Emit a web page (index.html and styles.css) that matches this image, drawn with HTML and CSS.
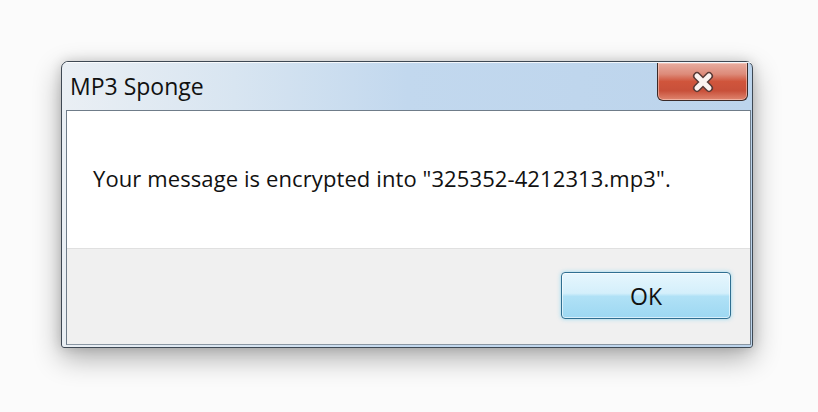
FILE: index.html
```html
<!DOCTYPE html>
<html lang="en">
<head>
    <meta charset="UTF-8">
    <title>MP3 Sponge</title>
    <link rel="stylesheet" href="styles.css">
</head>
<body>
    <div class="window">
        <div class="titlebar">
            <span class="title">MP3 Sponge</span>
            <button class="close-btn" aria-label="Close">
                <svg width="26" height="22" viewBox="0 0 26 22">
                    <path d="M7 5 L19 17 M19 5 L7 17" stroke="#5a3a36" stroke-width="8" stroke-linecap="round"/>
                    <path d="M7 5 L19 17 M19 5 L7 17" stroke="#fbf3f0" stroke-width="5" stroke-linecap="round"/>
                </svg>
            </button>
        </div>

        <div class="client">
            <div class="message">
                Your message is encrypted into "325352-4212313.mp3".
            </div>
            <div class="footer">
                <button class="ok-btn">OK</button>
            </div>
        </div>
    </div>
</body>
</html>
```

FILE: styles.css
```css
* {
    margin: 0;
    padding: 0;
    box-sizing: border-box;
}

body {
    font-family: 'Open Sans', 'Noto Sans', sans-serif;
    background: #fbfbfb;
    padding: 61px 0 0 61px;
    height: 412px;
    overflow: hidden;
}

.window {
    width: 692px;
    height: 287px;
    display: flex;
    flex-direction: column;
    border: 1px solid #3e4853;
    border-radius: 7px 7px 3px 3px;
    background: linear-gradient(90deg, #eaeff4 0%, #d8e5f1 25%, #c2d8ee 50%, #bcd4ec 100%);
    padding: 0 1px 2px 4px;
    box-shadow: 0 10px 28px rgba(0, 0, 0, 0.32), 0 0 12px rgba(0, 0, 0, 0.15);
}

.titlebar {
    height: 48px;
    display: flex;
    justify-content: space-between;
    align-items: flex-start;
    border-top: 1px solid rgba(255, 255, 255, 0.8);
}

.title {
    padding: 8px 0 0 4px;
    font-size: 23px;
    line-height: 31px;
    color: #111;
}

.close-btn {
    width: 91px;
    height: 38px;
    margin-right: 3px;
    border: 1px solid #3a2a28;
    border-top: none;
    border-radius: 0 0 6px 6px;
    background: linear-gradient(180deg, #e8ada0 0%, #dd8b7a 30%, #d0553c 50%, #c8503a 75%, #df8670 100%);
    box-shadow: inset 0 0 0 1px rgba(255, 220, 210, 0.5);
    display: flex;
    justify-content: center;
    align-items: center;
}

.client {
    flex: 1;
    display: flex;
    flex-direction: column;
    border: 1px solid #6f7c89;
    border-bottom-color: #8a96a2;
    background: #ffffff;
}

.message {
    height: 137px;
    padding: 52px 0 0 26px;
    font-size: 22px;
    line-height: 30px;
    letter-spacing: 0.1px;
    color: #111;
}

.footer {
    flex: 1;
    display: flex;
    justify-content: flex-end;
    align-items: flex-start;
    background: #f0f0f0;
    border-top: 1px solid #e0e0e0;
    padding: 23px 19px 0 0;
}

.ok-btn {
    width: 170px;
    height: 47px;
    border: 1px solid #2f6f91;
    border-radius: 4px;
    background: linear-gradient(180deg, #e6f6fd 0%, #d4effb 45%, #b0e1f6 52%, #9dd8f2 100%);
    box-shadow: 0 0 4px rgba(90, 200, 240, 0.6), inset 0 0 0 1px rgba(255, 255, 255, 0.6);
    font-family: 'Open Sans', 'Noto Sans', sans-serif;
    font-size: 23px;
    color: #111;
}
```
